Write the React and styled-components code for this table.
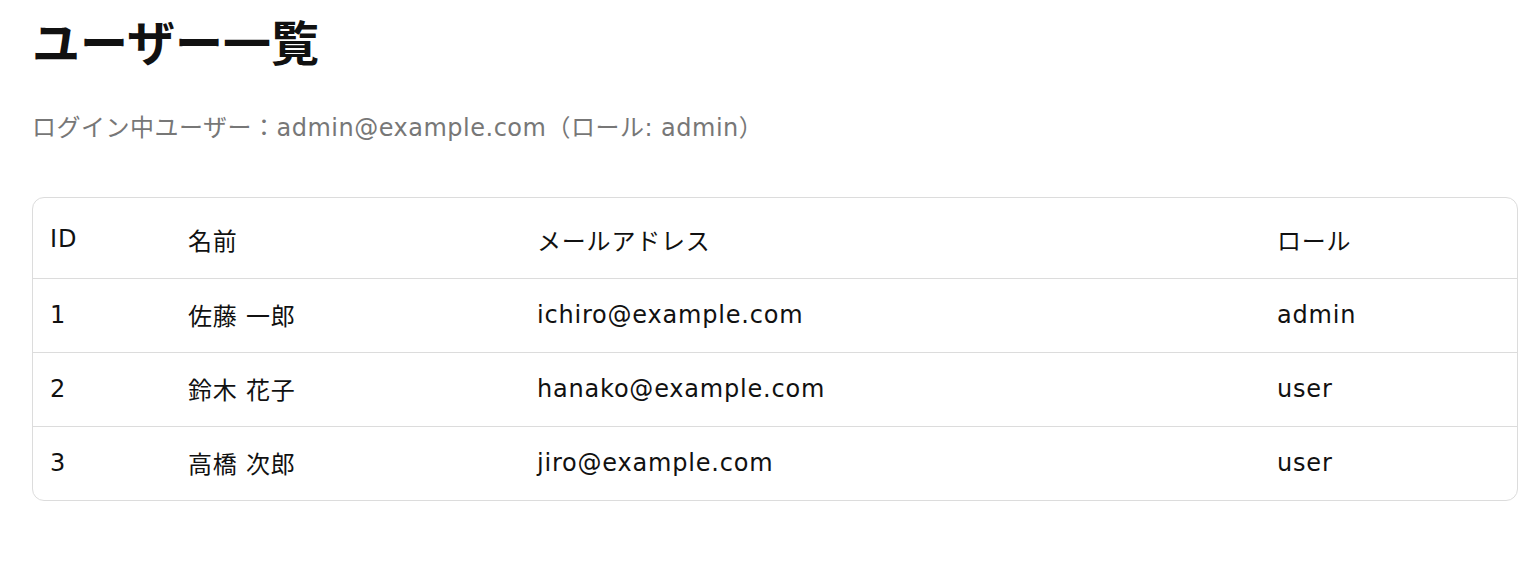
import React from "react";
import styled, { createGlobalStyle } from "styled-components";

const Global = createGlobalStyle`
  html, body { margin: 0; padding: 0; background: #fff; }
  body {
    font-family: "DejaVu Sans", "Noto Sans CJK JP", sans-serif;
    color: #111;
  }
`;

const Page = styled.main`
  padding: 8px 18px 0 32px;
`;

const Title = styled.h1`
  margin: 0;
  font-family: "Noto Sans CJK JP", sans-serif;
  font-size: 48px;
  font-weight: 700;
  line-height: 64px;
  color: #111;
`;

const Subtitle = styled.p`
  margin: 40px 0 0;
  font-size: 24px;
  line-height: 32px;
  letter-spacing: 0.5px;
  color: #777;
`;

const TableCard = styled.div`
  margin-top: 53px;
  border: 1px solid #dcdcdc;
  border-radius: 12px;
  overflow: hidden;
`;

const Table = styled.table`
  width: 100%;
  border-collapse: collapse;
  table-layout: fixed;
`;

const HeadCell = styled.th`
  height: 78px;
  padding: 2px 17px 0;
  text-align: left;
  font-weight: 400;
  font-size: 24px;
  letter-spacing: 0.8px;
  color: #111;
`;

const Row = styled.tr`
  border-top: 1px solid #dcdcdc;
`;

const Cell = styled.td`
  height: 71px;
  padding: 0 17px 2px;
  font-size: 24px;
  letter-spacing: 0.8px;
  color: #111;
`;

const users = [
  { id: 1, name: "佐藤 一郎", email: "ichiro@example.com", role: "admin" },
  { id: 2, name: "鈴木 花子", email: "hanako@example.com", role: "user" },
  { id: 3, name: "高橋 次郎", email: "jiro@example.com", role: "user" },
];

export default function App() {
  return (
    <>
      <Global />
      <Page>
        <Title>ユーザー一覧</Title>
        <Subtitle>ログイン中ユーザー：admin@example.com（ロール: admin）</Subtitle>
        <TableCard>
          <Table>
            <colgroup>
              <col style={{ width: 138 }} />
              <col style={{ width: 349 }} />
              <col style={{ width: 740 }} />
              <col />
            </colgroup>
            <thead>
              <tr>
                <HeadCell>ID</HeadCell>
                <HeadCell>名前</HeadCell>
                <HeadCell>メールアドレス</HeadCell>
                <HeadCell>ロール</HeadCell>
              </tr>
            </thead>
            <tbody>
              {users.map((u) => (
                <Row key={u.id}>
                  <Cell>{u.id}</Cell>
                  <Cell>{u.name}</Cell>
                  <Cell>{u.email}</Cell>
                  <Cell>{u.role}</Cell>
                </Row>
              ))}
            </tbody>
          </Table>
        </TableCard>
      </Page>
    </>
  );
}
